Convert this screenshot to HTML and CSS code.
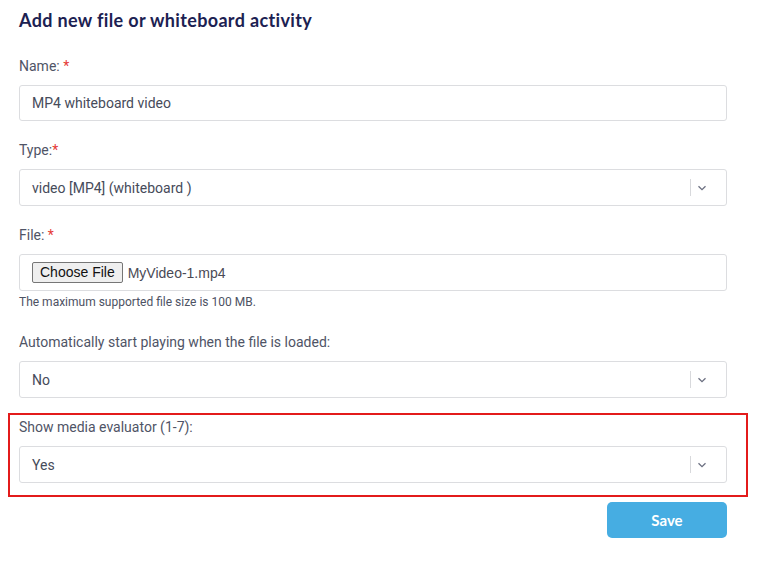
FILE: index.html
```html
<!DOCTYPE html>
<html>
<head>
<meta charset="UTF-8"/>
<title>Add new file or whiteboard activity</title>
<link rel="stylesheet" href="styles.css">
</head>
<body>
<section class="form">
<h1>Add new file or whiteboard activity</h1>

<div class="field">
<label>Name: <span class="req">*</span></label>
<div class="control">MP4 whiteboard video</div>
</div>

<div class="field">
<label>Type:<span class="req">*</span></label>
<div class="control select">
<span>video [MP4] (whiteboard )</span>
<span class="sep"></span>
<svg class="chev" width="10" height="6" viewBox="0 0 10 6"><path d="M1.5 1.2 L5 4.6 L8.5 1.2" fill="none" stroke="#6b6f80" stroke-width="1.3"/></svg>
</div>
</div>

<div class="field file-field">
<label>File: <span class="req">*</span></label>
<div class="control file">
<span class="file-btn">Choose File</span>
<span class="file-name">MyVideo-1.mp4</span>
</div>
<p class="hint">The maximum supported file size is 100 MB.</p>
</div>

<div class="field">
<label>Automatically start playing when the file is loaded:</label>
<div class="control select">
<span>No</span>
<span class="sep"></span>
<svg class="chev" width="10" height="6" viewBox="0 0 10 6"><path d="M1.5 1.2 L5 4.6 L8.5 1.2" fill="none" stroke="#6b6f80" stroke-width="1.3"/></svg>
</div>
</div>

<div class="field highlight">
<label>Show media evaluator (1-7):</label>
<div class="control select">
<span>Yes</span>
<span class="sep"></span>
<svg class="chev" width="10" height="6" viewBox="0 0 10 6"><path d="M1.5 1.2 L5 4.6 L8.5 1.2" fill="none" stroke="#6b6f80" stroke-width="1.3"/></svg>
</div>
</div>

<div class="actions">
<button class="save">Save</button>
</div>
</section>
</body>
</html>
```

FILE: styles.css
```css
body {
    margin: 0;
    background: #fff;
    font-family: Roboto, "Liberation Sans", sans-serif;
    color: #4d5263;
}
.form {
    width: 708px;
    padding: 8px 0 0 19px;
}
h1 {
    font-family: Lato, "Open Sans", sans-serif;
    font-weight: 700;
    font-size: 18px;
    letter-spacing: 0.35px;
    line-height: 24px;
    color: #1c2152;
    margin: 0 0 24px 0;
}
.field {
    margin-bottom: 19px;
}
.field label {
    display: block;
    font-size: 14px;
    line-height: 20px;
    margin-bottom: 9px;
    color: #4f5466;
}
.req {
    color: #e53935;
}
.control {
    height: 36px;
    box-sizing: border-box;
    border: 1px solid #dcdde0;
    border-radius: 3px;
    padding: 0 12px;
    display: flex;
    align-items: center;
    font-size: 14px;
    color: #464b5a;
}
.select {
    height: 37px;
}
.select span:first-child {
    flex: 1;
}
.sep {
    width: 1px;
    height: 17px;
    background: #d8d9dc;
    margin-right: 6px;
}
.chev {
    margin-right: 7px;
}
.file {
    height: 37px;
}
.file-btn {
    font-family: "Liberation Sans", Arial, sans-serif;
    font-size: 14px;
    color: #111;
    background: #efefef;
    border: 1px solid #767676;
    border-radius: 2px;
    padding: 0 7px;
    height: 21px;
    box-sizing: border-box;
    line-height: 19px;
}
.file-name {
    font-family: "Liberation Sans", Arial, sans-serif;
    font-size: 14px;
    color: #4a4a55;
    margin-left: 5px;
}
.file-field {
    margin-bottom: 23px;
}
.hint {
    margin: 4px 0 0 0;
    font-size: 12px;
    line-height: 14px;
    color: #4d5263;
}
.highlight {
    border: 2px solid #e31b1b;
    margin: -4px -21px 0 -11px;
    padding: 2px 19px 12px 9px;
}
.actions {
    display: flex;
    justify-content: flex-end;
    margin-top: 5px;
}
.save {
    width: 120px;
    height: 36px;
    border: none;
    border-radius: 5px;
    background: #46ade2;
    color: #fff;
    font-family: Lato, "Open Sans", sans-serif;
    font-weight: 700;
    font-size: 15px;
}
```
